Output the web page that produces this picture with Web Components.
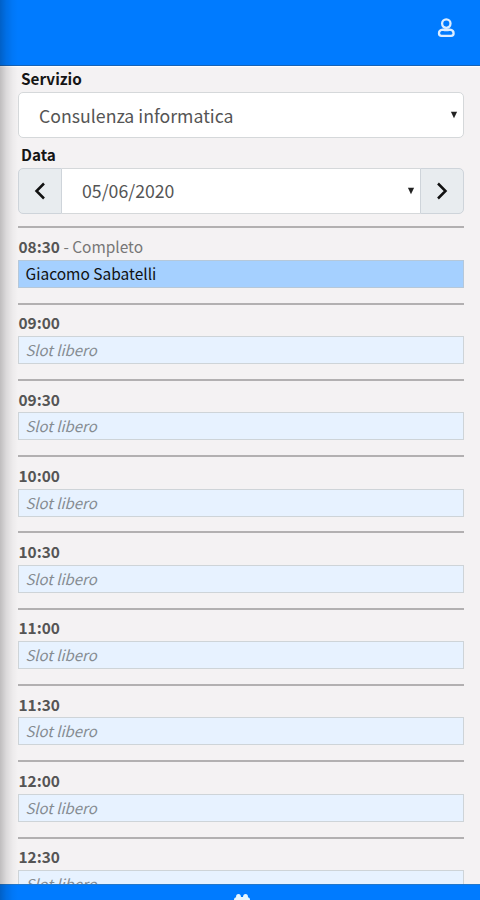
<!DOCTYPE html>
<html lang="it"><head><meta charset="utf-8"><title>Agenda</title>
<style>
html,body{margin:0;height:100%;overflow:hidden}
body{font-family:"Noto Sans CJK JP","Noto Sans",sans-serif;background:#f4f2f3}
</style></head><body><booking-app></booking-app>
<script>
const define=(name,html)=>customElements.define(name,class extends HTMLElement{
  connectedCallback(){
    if(this.shadowRoot)return;
    const t=document.createElement('template');t.innerHTML=html;
    this.attachShadow({mode:'open'}).append(t.content.cloneNode(true));
  }
});
define('app-header',`<style>
:host{display:flex;justify-content:flex-end;box-sizing:border-box;height:66px;padding:17px 25px 0 0;background:#007bff;border-bottom:1px solid #1763b5;box-shadow:0 1px 1px #fff}
svg{display:block}</style>
<svg width="18" height="22" viewBox="0 0 18 22" fill="none" stroke="#dcedff" stroke-width="2.3"><circle cx="9.3" cy="6.6" r="4.2"/><path d="M5.8 12.6C3.4 12.8 2 14.2 2 16.2C2 18 3 18.8 4.5 18.8H14.1C15.6 18.8 16.6 18 16.6 16.2C16.6 14.2 15.2 12.8 12.8 12.6C10.5 13.3 8.1 13.3 5.8 12.6Z"/></svg>`);
define('field-label',`<style>:host{display:block;font-size:15.3px;font-weight:700;line-height:20px;padding-left:3px;color:#151515}</style><slot></slot>`);
define('select-box',`<style>
:host{display:flex;align-items:center;justify-content:space-between;box-sizing:border-box;height:46px;flex:1;padding:0 5px 0 20px;background:#fff;border:1.5px solid #d5d8da;border-radius:5px;color:#555;font-size:17.7px;line-height:26px}
:host([joined]){border-radius:0;border-width:1px 0}
span{margin-top:-1px}
:host([joined]) span{margin-top:-2px}
svg{display:block}</style><span><slot></slot></span><svg width="8" height="8" viewBox="0 0 8 8"><path d="M.9 .7H7.1L4 7.3Z" fill="#222"/></svg>`);
define('step-button',`<style>
:host{display:flex;align-items:center;justify-content:center;box-sizing:border-box;width:44px;height:46px;background:#e8ecef;border:1px solid #ced4da;border-radius:5px 0 0 5px}
:host([next]){border-radius:0 5px 5px 0}:host([next]) svg{transform:scaleX(-1)}
</style><svg width="14" height="18" viewBox="0 0 14 18" fill="none" stroke="#111" stroke-width="2.5"><path d="M11 1.5L3.5 9L11 16.5"/></svg>`);
define('date-picker',`<style>:host{display:flex}</style><step-button></step-button><select-box joined><slot></slot></select-box><step-button next></step-button>`);
define('time-slot',`<style>
:host{display:block;box-sizing:border-box;height:76.28px;border-top:2px solid #b2b0b1;font-size:15.45px;color:#777}
.time{height:31.5px;box-sizing:border-box;padding:6.6px 0 0 .5px;line-height:22px;white-space:pre}
b{color:#555}
.entry{box-sizing:border-box;height:28px;line-height:25px;padding-left:6.5px;border:1.5px solid #ced4d8;background:#e7f2ff;color:#858b91;font-style:italic;font-size:14.9px}
:host([full]) .entry{background:#a5d0ff;color:#111;font-style:normal;border-color:#b5c8da;font-size:15.5px}
</style><div class="time"><b><slot name="time"></slot></b><slot name="status"></slot></div><div class="entry"><slot></slot></div>`);
define('bottom-bar',`<style>
:host{display:flex;justify-content:center;box-sizing:border-box;height:16px;background:#007bff;border-top:1px solid #2378cb;padding-top:9px;padding-left:4px;overflow:hidden}
svg{display:block;flex:none}</style><svg width="18" height="18" viewBox="0 0 18 18"><path d="M1 7V5.5Q1 3.5 3 3.2Q3 0 5.5 0Q7.8 0 8 3H10Q10.2 0 12.5 0Q15 0 15 3.2Q17 3.5 17 5.5V16H1Z" fill="#e7f7ff"/></svg>`);
customElements.define('booking-app',class extends HTMLElement{
  constructor(){super();
    const times=['08:30','09:00','09:30','10:00','10:30','11:00','11:30','12:00','12:30'];
    this.attachShadow({mode:'open'}).innerHTML=`<style>
:host{display:grid;grid-template-rows:66px minmax(0,1fr) 16px;height:100vh;position:relative;overflow:hidden}
:host::after{content:"";position:absolute;inset:0 auto 0 0;width:18px;background:linear-gradient(90deg,rgba(0,0,0,.22),rgba(0,0,0,.1) 35%,rgba(0,0,0,.03) 70%,transparent);pointer-events:none}
main{overflow:hidden;padding:2px 16px 0 18px}
section{display:flex;flex-direction:column;gap:4px}
.list{gap:0;margin-top:12.4px}
.service{display:flex}
.date{margin-top:6px;gap:4px}
</style><app-header></app-header><main>
<section><field-label>Servizio</field-label><div class="service"><select-box>Consulenza informatica</select-box></div></section>
<section class="date"><field-label>Data</field-label><date-picker>05/06/2020</date-picker></section>
<section class="list">${times.map((t,i)=>`<time-slot${i?'':' full'}><span slot="time">${t}</span>${i?'':'<span slot="status"> - Completo</span>'}${i?'Slot libero':'Giacomo Sabatelli'}</time-slot>`).join('')}</section>
</main><bottom-bar></bottom-bar>`;
  }
});
</script></body></html>
